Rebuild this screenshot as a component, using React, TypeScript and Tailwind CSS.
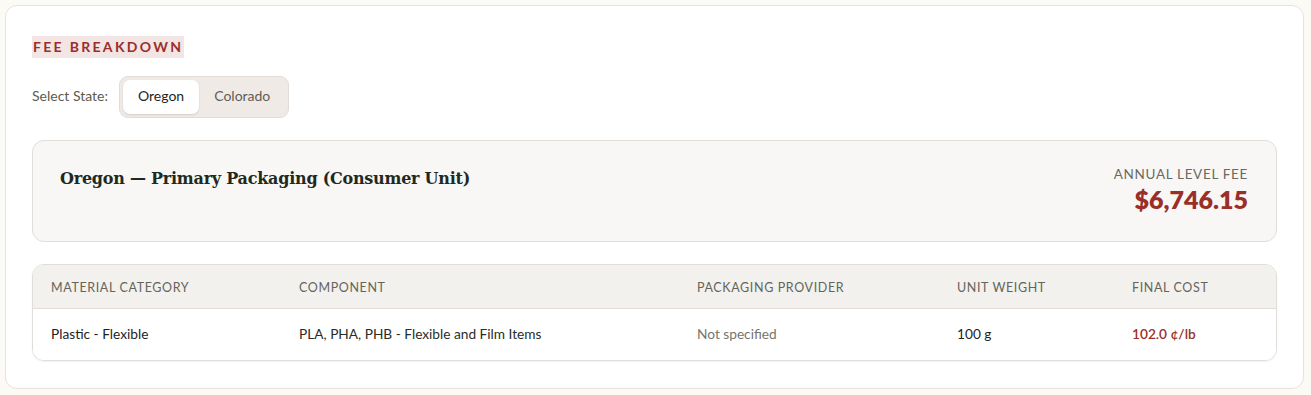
import { useState } from 'react';

const states = ['Oregon', 'Colorado'];

const columns = [
  { label: 'Material Category', width: 'w-[248px]' },
  { label: 'Component', width: 'w-[398px]' },
  { label: 'Packaging Provider', width: 'w-[260px]' },
  { label: 'Unit Weight', width: 'w-[175px]' },
  { label: 'Final Cost', width: 'flex-1' },
];

export default function App() {
  const [selected, setSelected] = useState('Oregon');

  return (
    <div className="min-h-screen bg-[#fbfaf5] pt-[5px] pl-[5px] font-['Lato',sans-serif]">
      <div className="w-[1299px] h-[384px] bg-white border border-[#e6e3d8] rounded-[12px] px-[26px] pt-[30px]">
        <div className="flex">
          <span className="bg-[#f2e5e3] text-[#9a2f2a] text-[14px] leading-[14px] font-bold tracking-[0.165em] px-[1px] py-[4px]">
            FEE BREAKDOWN
          </span>
        </div>

        <div className="flex items-center gap-[11px] mt-[18px]">
          <span className="text-[14px] text-[#5b5b52] leading-[20px] mb-[3px]">Select State:</span>
          <div className="flex p-[3px] bg-[#f0eae7] border border-[#e2dcd8] rounded-[9px]">
            {states.map((s) => (
              <button
                key={s}
                onClick={() => setSelected(s)}
                className={
                  s === selected
                    ? 'h-[34px] px-[15px] pb-[3px] rounded-[7px] bg-white text-[14px] text-[#22261f] shadow-[0_1px_2px_rgba(0,0,0,0.12)]'
                    : 'h-[34px] px-[15px] pb-[3px] rounded-[7px] text-[14px] text-[#5f5d55]'
                }
              >
                {s}
              </button>
            ))}
          </div>
        </div>

        <div className="mt-[22px] h-[102px] bg-[#f8f7f5] border border-[#e1ded9] rounded-[12px] flex justify-between pl-[27px] pr-[28px] pt-[26px]">
          <h3 className="font-['DejaVu_Serif',serif] font-bold text-[16px] text-[#1f2a1e] leading-[24px] tracking-[-0.015em]">
            Oregon — Primary Packaging (Consumer Unit)
          </h3>
          <div className="text-right">
            <div className="text-[13.5px] text-[#6b6a60] tracking-[0.05em] leading-[16px] mt-[-1px]">ANNUAL LEVEL FEE</div>
            <div className="text-[25px] font-extrabold text-[#9a2f2a] leading-[30px] mt-[2px]">$6,746.15</div>
          </div>
        </div>

        <div className="mt-[22px] border border-[#e1ded9] rounded-[12px] overflow-hidden shadow-[0_1px_2px_rgba(0,0,0,0.06)]">
          <div className="flex h-[44px] items-center bg-[#f2f1ee] border-b border-[#e1ded9] px-[18px] pt-[3px]">
            {columns.map((c) => (
              <div key={c.label} className={`${c.width} text-[12.5px] uppercase tracking-[0.05em] text-[#65645a]`}>
                {c.label}
              </div>
            ))}
          </div>
          <div className="flex h-[51px] items-center bg-white px-[18px] text-[13.7px]">
            <div className="w-[248px] text-[#1f231d]">Plastic - Flexible</div>
            <div className="w-[398px] text-[#2a2d27]">PLA, PHA, PHB - Flexible and Film Items</div>
            <div className="w-[260px] text-[#76756c]">Not specified</div>
            <div className="w-[175px] text-[#1f231d]">100 g</div>
            <div className="flex-1 text-[#9a2f2a] font-semibold">102.0 ¢/lb</div>
          </div>
        </div>
      </div>
    </div>
  );
}
